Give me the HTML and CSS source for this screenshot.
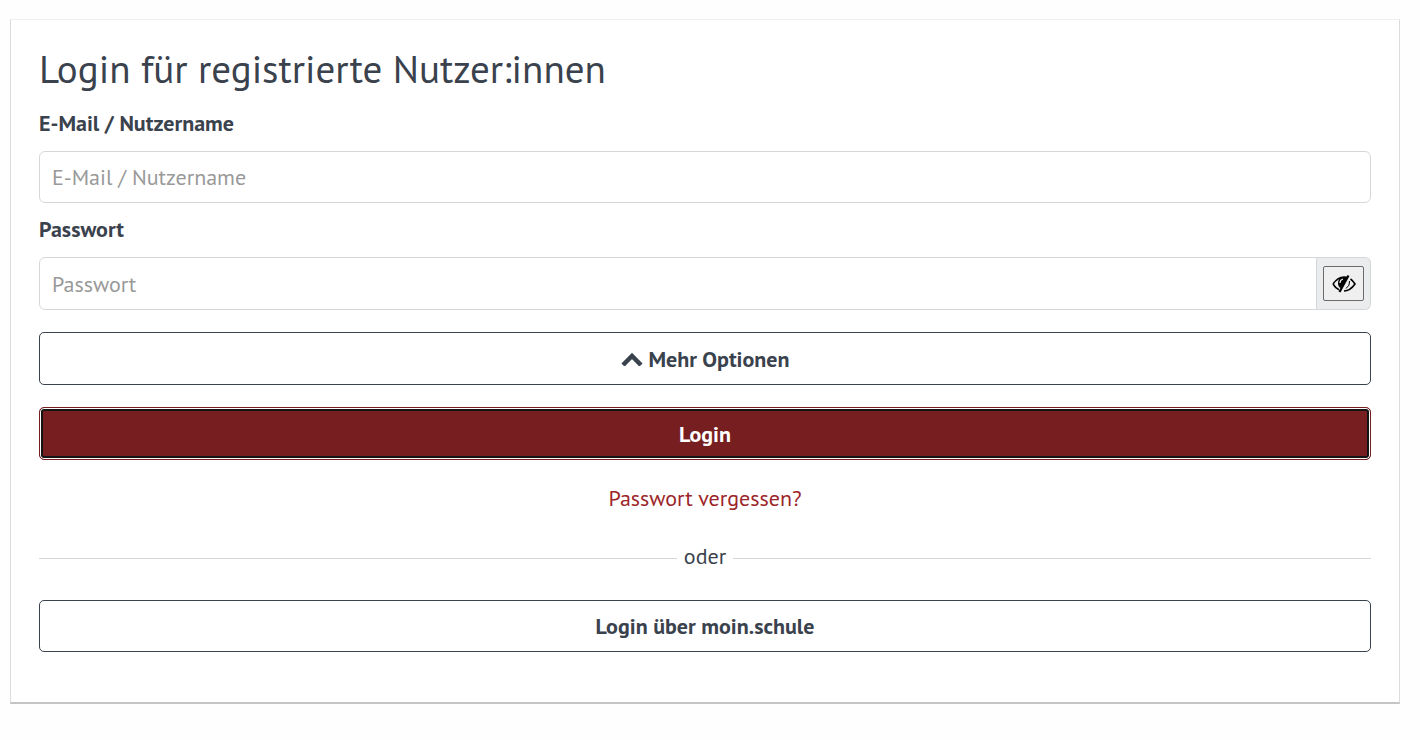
FILE: index.html
```html
<!DOCTYPE html>
<html lang="de">
<head>
<meta charset="utf-8">
<meta name="viewport" content="width=device-width, initial-scale=1">
<title>Login</title>
<link rel="stylesheet" href="styles.css">
</head>
<body>
<main class="card">
  <h1 class="title">Login für registrierte Nutzer:innen</h1>
  <form class="form">
    <label class="label" for="user">E-Mail / Nutzername</label>
    <input class="input" id="user" type="text" placeholder="E-Mail / Nutzername">
    <label class="label" for="password">Passwort</label>
    <div class="group">
      <input class="input group-input" id="password" type="password" placeholder="Passwort">
      <div class="addon">
        <button class="reveal" type="button" aria-label="Passwort anzeigen">
          <svg class="eye" viewBox="0 0 24 20" aria-hidden="true">
            <path d="M1 10Q6 3 12 3Q14 3 15.500 3.600M18.500 5Q21 6.700 23 10Q18 17 12 17M7 15.800Q3.500 14.200 1 10" fill="none" stroke="#000" stroke-width="1.600"/>
            <path d="M12 3C8 3 6 5.800 6 9.200C6 11.400 7 13.200 8.400 14.200L15 4C14 3.300 13 3 12 3Z"/>
            <path d="M8 9Q8 5.800 11 5" fill="none" stroke="#eee" stroke-width="1.200"/>
            <path d="M17.500 7Q18.300 11.500 14 14.500" fill="none" stroke="#000" stroke-width="1"/>
            <path d="M16.500 1.500L7.500 18" fill="none" stroke="#000" stroke-width="2.200"/>
          </svg>
        </button>
      </div>
    </div>
    <button class="button outline" type="button">
      <svg class="chevron" viewBox="0 0 22 14" aria-hidden="true"><path d="M2 13L11 4L20 13" fill="none" stroke="currentColor" stroke-width="4.500"/></svg>
      <span>Mehr Optionen</span>
    </button>
    <button class="button primary" type="submit">Login</button>
  </form>
  <p class="forgot"><a class="link" href="#">Passwort vergessen?</a></p>
  <div class="divider"><span>oder</span></div>
  <button class="button outline" type="button">Login über moin.schule</button>
</main>
</body>
</html>
```
FILE: styles.css
```css
* {
  box-sizing: border-box;
}

body {
  margin: 19px 20px 35px 10px;
  background: #fefefe;
  color: #3a424d;
  font-family: "PT Sans", "Noto Sans", sans-serif;
  font-size: 22px;
  line-height: 32px;
}

.card {
  padding: 25px 28px 50px;
  border: 1px solid #dcdcdc;
  border-top-color: #f0f0f0;
  border-bottom: 2px solid #c4c4c4;
  background: #fff;
}

.title {
  margin: 0 0 14px;
  font-size: 39px;
  font-weight: 400;
  line-height: 48px;
}

.form {
  display: flex;
  flex-direction: column;
}

.label {
  margin-bottom: 12px;
  font-weight: 700;
}

.input {
  width: 100%;
  height: 52px;
  margin: 0 0 10px;
  padding: 0 12px;
  border: 1px solid #d5d8d9;
  border-radius: 6px;
  background: #fff;
  color: inherit;
  font: inherit;
}

.input::placeholder {
  color: #999;
  opacity: 1;
}

.group {
  display: flex;
  height: 53px;
  margin-bottom: 22px;
}

.group-input {
  flex: 1;
  min-width: 0;
  height: auto;
  margin: 0;
  border-radius: 6px 0 0 6px;
}

.addon {
  display: flex;
  align-items: center;
  padding: 0 6px;
  border: 1px solid #d5d8d9;
  border-left: 0;
  border-radius: 0 6px 6px 0;
  background: #ebecee;
}

.reveal {
  display: flex;
  align-items: center;
  justify-content: center;
  width: 41px;
  height: 35px;
  padding: 0;
  border: 1px solid #6b6b6b;
  border-radius: 2px;
  background: #efefef;
}

.eye {
  width: 24px;
  height: 20px;
}

.button {
  display: flex;
  align-items: center;
  justify-content: center;
  gap: 6px;
  width: 100%;
  min-height: 52px;
  padding: 8px 12px;
  border-radius: 5px;
  font: inherit;
  font-weight: 700;
}

.form .button {
  min-height: 53px;
}

.outline {
  border: 1px solid #3a424d;
  background: #fff;
  color: #3a424d;
}

.chevron {
  width: 22px;
  height: 14px;
}

.primary {
  margin-top: 22px;
  border: 1px solid #761e20;
  background: #761e20;
  color: #fff;
  box-shadow: inset 0 0 0 1px #fff, inset 0 0 0 3px #141414;
}

.forgot {
  margin: 22px 0 26px;
  text-align: center;
}

.link {
  color: #9b2528;
  text-decoration: none;
}

.divider {
  display: flex;
  align-items: center;
  gap: 7px;
  margin-bottom: 28px;
}

.divider::before,
.divider::after {
  content: "";
  flex: 1;
  height: 1px;
  margin-top: 4px;
  background: #d5d8d9;
}
```
